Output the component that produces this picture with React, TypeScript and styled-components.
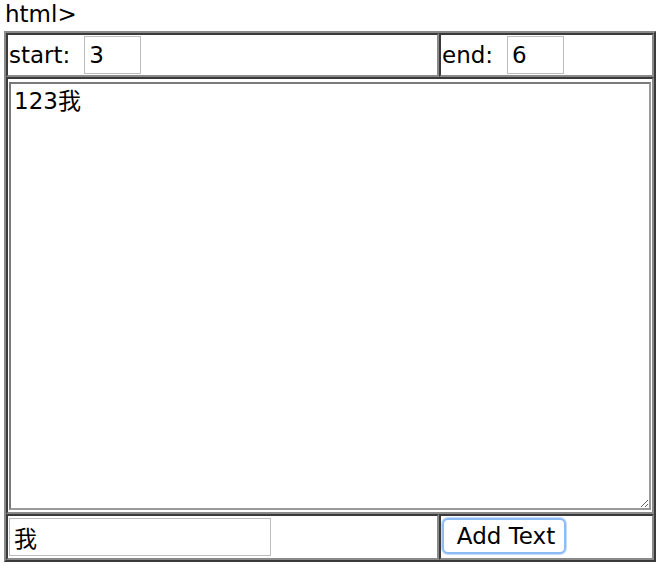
import React, {useState} from 'react';
import styled, {createGlobalStyle} from 'styled-components';

const GlobalStyle = createGlobalStyle`
  html, body {
    margin: 0;
    padding: 0;
    background: #fff;
  }
  body {
    font-family: 'DejaVu Sans', 'Noto Sans CJK SC', sans-serif;
    font-size: 23px;
    color: #000;
  }
`;

const Page = styled.div`
  padding: 0 0 0 4px;
`;

const Heading = styled.div`
  height: 31px;
  line-height: 29px;
  padding-left: 1px;
`;

const Grid = styled.table`
  width: 652px;
  table-layout: fixed;
  border-collapse: separate;
  border-spacing: 0;
  border: 2px solid;
  border-color: #8a8a8a #3a3a3a #3a3a3a #8a8a8a;
`;

const Cell = styled.td<{$w?: number}>`
  ${p => (p.$w ? `width: ${p.$w}px;` : '')}
  padding: 1px;
  border: 2px solid;
  border-color: #3a3a3a #8a8a8a #8a8a8a #3a3a3a;
  vertical-align: middle;
  white-space: nowrap;
`;

const Label = styled.span`
  display: inline-block;
  vertical-align: middle;
  margin-right: 14px;
`;

const Field = styled.input<{$w: number}>`
  width: ${p => p.$w}px;
  height: 38px;
  box-sizing: border-box;
  border: 1px solid #bdbdbd;
  padding: 0 4px;
  font: inherit;
  vertical-align: middle;
  outline: none;
`;

const Editor = styled.textarea`
  display: block;
  width: 642px;
  height: 428px;
  box-sizing: border-box;
  margin: 2px 0 1px;
  border: 2px solid;
  border-color: #7a7a7a #9a9a9a #9a9a9a #7a7a7a;
  padding: 4px 3px;
  font: inherit;
  line-height: 26px;
  resize: both;
  outline: none;
`;

const AddButton = styled.button`
  height: 36px;
  width: 124px;
  box-sizing: border-box;
  background: #fff;
  border: 2px solid #8cbcf3;
  border-radius: 6px;
  box-shadow: 0 0 0 1px #c6ddf8;
  font: inherit;
  padding: 0 0 0 4px;
  margin: 1px 0 3px;
  vertical-align: middle;
`;

export default function App() {
  const [start, setStart] = useState('3');
  const [end, setEnd] = useState('6');
  const [text, setText] = useState('123我');
  const [insert, setInsert] = useState('我');

  return (
    <Page>
      <GlobalStyle />
      <Heading>html&gt;</Heading>
      <Grid>
        <tbody>
          <tr>
            <Cell $w={427}>
              <Label>start:</Label>
              <Field $w={57} value={start} onChange={e => setStart(e.target.value)} />
            </Cell>
            <Cell>
              <Label>end:</Label>
              <Field $w={57} value={end} onChange={e => setEnd(e.target.value)} />
            </Cell>
          </tr>
          <tr>
            <Cell colSpan={2}>
              <Editor value={text} onChange={e => setText(e.target.value)} />
            </Cell>
          </tr>
          <tr>
            <Cell>
              <Field $w={262} value={insert} onChange={e => setInsert(e.target.value)} />
            </Cell>
            <Cell>
              <AddButton onClick={() => setText(text + insert)}>Add Text</AddButton>
            </Cell>
          </tr>
        </tbody>
      </Grid>
    </Page>
  );
}
